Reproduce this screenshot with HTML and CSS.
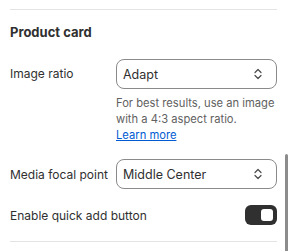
FILE: index.html
```html
<!DOCTYPE html>
<html lang="en">
<head>
    <meta charset="UTF-8">
    <title>Product card</title>
    <link rel="stylesheet" href="styles.css">
</head>
<body>
<div class="panel">
    <div class="divider"></div>
    <h2 class="title">Product card</h2>

    <div class="row top">
        <div class="label">Image ratio</div>
        <div class="field">
            <div class="select">
                <span>Adapt</span>
                <svg class="chev" width="10" height="14" viewBox="0 0 10 14"><path d="M2 5.5 L5 2.5 L8 5.5 M2 8.5 L5 11.5 L8 8.5" fill="none" stroke="#4a4a4a" stroke-width="1.2" stroke-linecap="round" stroke-linejoin="round"/></svg>
            </div>
            <p class="help">For best results, use an image with a 4:3 aspect ratio.<br><a href="#">Learn more</a></p>
        </div>
    </div>

    <div class="row">
        <div class="label">Media focal point</div>
        <div class="field">
            <div class="select">
                <span>Middle Center</span>
                <svg class="chev" width="10" height="14" viewBox="0 0 10 14"><path d="M2 5.5 L5 2.5 L8 5.5 M2 8.5 L5 11.5 L8 8.5" fill="none" stroke="#4a4a4a" stroke-width="1.2" stroke-linecap="round" stroke-linejoin="round"/></svg>
            </div>
        </div>
    </div>

    <div class="row switch-row">
        <div class="label">Enable quick add button</div>
        <div class="toggle"><div class="knob"></div></div>
    </div>

    <div class="divider bottom"></div>
</div>
<div class="scrollbar"></div>
</body>
</html>
```

FILE: styles.css
```css
*{
    margin: 0;
    padding: 0;
    box-sizing: border-box;
}
body{
    font-family: Inter, "Noto Sans", sans-serif;
    color: #303030;
    background: #ffffff;
    width: 288px;
    height: 251px;
    overflow: hidden;
    position: relative;
}
.panel{
    padding: 9px 11px 0 10px;
}
.divider{
    border-top: 1px solid #e3e3e3;
}
.title{
    font-size: 13px;
    font-weight: 650;
    line-height: 20px;
    margin-top: 12px;
    margin-bottom: 17px;
}
.row{
    display: grid;
    grid-template-columns: 106px 1fr;
    align-items: center;
    font-size: 12px;
}
.row.top{
    align-items: start;
}
.row.top .label{
    line-height: 30px;
}
.row + .row{
    margin-top: 16px;
}
.select{
    height: 30px;
    border: 1px solid #8a8a8a;
    border-radius: 8px;
    display: flex;
    align-items: center;
    justify-content: space-between;
    padding: 0 13px 0 6px;
    font-size: 12.5px;
}
.chev{
    display: block;
}
.help{
    margin-top: 6px;
    font-size: 11.2px;
    line-height: 16px;
    color: #616161;
}
.help a{
    color: #005bd3;
    text-decoration: underline;
}
.switch-row{
    grid-template-columns: 1fr auto;
}
.switch-row + .divider{
    margin-top: 16px;
}
.toggle{
    width: 32px;
    height: 20px;
    border-radius: 6px;
    background: #303030;
    display: flex;
    align-items: center;
    justify-content: flex-end;
    padding-right: 4px;
}
.knob{
    width: 12px;
    height: 12px;
    border-radius: 3px;
    background: #ffffff;
}
.scrollbar{
    position: absolute;
    left: 285px;
    top: 154px;
    width: 3px;
    height: 97px;
    border-radius: 2px 2px 0 0;
    background: #8c8c8c;
}
```
